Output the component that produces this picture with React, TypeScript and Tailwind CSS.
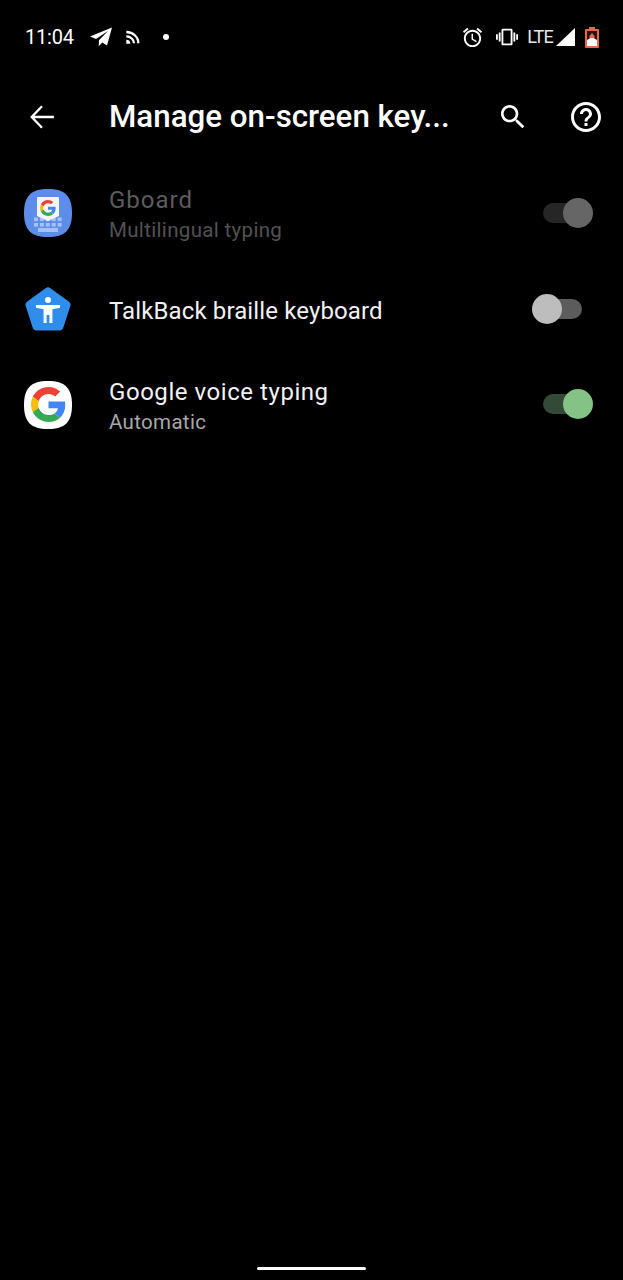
const FONT = "font-['Roboto',sans-serif]";

function GoogleG({ className }: { className?: string }) {
  return (
    <svg viewBox="0 0 48 48" className={className}>
      <path fill="#EA4335" d="M24 9.5c3.54 0 6.71 1.22 9.21 3.6l6.85-6.85C35.9 2.38 30.47 0 24 0 14.62 0 6.51 5.38 2.56 13.22l7.98 6.19C12.43 13.72 17.74 9.5 24 9.5z" />
      <path fill="#4285F4" d="M46.98 24.55c0-1.57-.15-3.09-.38-4.55H24v9.02h12.94c-.58 2.96-2.26 5.48-4.78 7.18l7.73 6c4.51-4.18 7.09-10.36 7.09-17.65z" />
      <path fill="#FBBC05" d="M10.53 28.59c-.48-1.45-.76-2.99-.76-4.59s.27-3.14.76-4.59l-7.98-6.19C.92 16.46 0 20.12 0 24c0 3.88.92 7.54 2.56 10.78l7.97-6.19z" />
      <path fill="#34A853" d="M24 48c6.48 0 11.93-2.13 15.89-5.81l-7.73-6c-2.15 1.45-4.92 2.3-8.16 2.3-6.26 0-11.57-4.22-13.47-9.91l-7.98 6.19C6.51 42.62 14.62 48 24 48z" />
    </svg>
  );
}

function Squircle({ fill }: { fill: string }) {
  return <path fill={fill} d="M24 0C41 0 48 7 48 24S41 48 24 48 0 41 0 24 7 0 24 0z" />;
}

function GboardIcon() {
  const keys = [0, 1, 2, 3, 4];
  return (
    <div className="relative h-12 w-12">
      <svg viewBox="0 0 48 48" className="h-12 w-12">
        <Squircle fill="#5c8ee9" />
        {keys.map((k) => (
          <rect key={`a${k}`} x={10 + k * 5.9} y={28.5} width="4" height="3.6" fill="#a6c2f5" />
        ))}
        {keys.map((k) => (
          <rect key={`b${k}`} x={10 + k * 5.9} y={34} width="4" height="3.6" fill="#a6c2f5" />
        ))}
        <rect x="14" y="39" width="20" height="4" fill="#a6c2f5" />
        <path fill="#f3f5fb" d="M14 8h20a1 1 0 0 1 1 1v18l-11 5-11-5V9a1 1 0 0 1 1-1z" />
      </svg>
      <GoogleG className="absolute left-[16px] top-[11px] h-[16px] w-[16px]" />
    </div>
  );
}

function TalkBackIcon() {
  return (
    <svg viewBox="0 0 46 45" className="h-[45px] w-[46px]">
      <path fill="#2f8eec" d="M20.6 1.2a4 4 0 0 1 4.8 0l18.4 13.4a4 4 0 0 1 1.5 4.5l-7 21.6a4 4 0 0 1-3.8 2.8H11.5a4 4 0 0 1-3.8-2.8l-7-21.6a4 4 0 0 1 1.5-4.500z" />
      <circle cx="23" cy="13" r="3" fill="#fff" />
      <path fill="#fff" d="M11 18h24v2.800l-7.600 1.400V36h-3v-8h-2.800v8h-3V22.200L11 20.800z" />
    </svg>
  );
}

function GoogleIcon() {
  return (
    <div className="relative h-12 w-12">
      <svg viewBox="0 0 48 48" className="h-12 w-12">
        <Squircle fill="#ffffff" />
      </svg>
      <GoogleG className="absolute left-[7px] top-[6px] h-[35px] w-[35px]" />
    </div>
  );
}

function Toggle({ on, trackClass, thumbClass, className = '' }: { on: boolean; trackClass: string; thumbClass: string; className?: string }) {
  return (
    <div className={`relative h-[30px] w-[61px] ${className}`}>
      <div className={`absolute left-[11px] top-[5px] h-[20px] w-[39px] rounded-full ${trackClass}`} />
      <div className={`absolute top-0 h-[30px] w-[30px] rounded-full ${on ? 'left-[31px]' : 'left-0'} ${thumbClass}`} />
    </div>
  );
}

interface RowProps {
  icon: React.ReactNode;
  title: string;
  subtitle?: string;
  titleClass: string;
  subClass?: string;
  toggle: React.ReactNode;
}

function Row({ icon, title, subtitle, titleClass, subClass, toggle }: RowProps) {
  return (
    <div className="flex h-[96px] items-center pl-[24px] pr-[30px]">
      <div className="flex w-[48px] justify-center">{icon}</div>
      <div className="ml-[37px] min-w-0 flex-1 pt-[4px]">
        <div className={`text-[24px] leading-[30px] ${titleClass}`}>{title}</div>
        {subtitle && <div className={`text-[20.5px] leading-[31px] tracking-[0.33px] ${subClass}`}>{subtitle}</div>}
      </div>
      {toggle}
    </div>
  );
}

export default function App() {
  return (
    <div className={`flex h-[1280px] w-[623px] flex-col overflow-hidden bg-black text-white ${FONT}`}>
      {/* status bar */}
      <div className="flex h-[74px] shrink-0 items-center pl-[25px] pr-[24px]">
        <span className="text-[20px] leading-none tracking-[-0.2px]">11:04</span>
        <svg viewBox="0 0 24 24" className="ml-[15px] h-[24px] w-[24px]">
          <path fill="#fff" d="M23 2.500 1 11.500l6 2.400L19 6 10 15.200l-.3 6 3.600-3.800 4.700 3.200z" />
        </svg>
        <svg viewBox="0 0 24 24" className="ml-[12px] h-[16px] w-[16px]">
          <path fill="none" stroke="#fff" strokeWidth="3.400" d="M2 4.500c10 0 18 7.500 18 17M2 11c6.500 0 11.500 5 11.500 10.500" />
          <path fill="#fff" d="M2 16a6 6 0 0 1 6 6H2z" />
        </svg>
        <span className="ml-[22px] h-[6px] w-[6px] rounded-full bg-white" />
        <div className="flex-1" />
        <svg viewBox="0 0 24 24" className="h-[23px] w-[23px]">
          <path fill="#fff" d="M22 5.720l-4.600-3.860-1.290 1.530 4.600 3.860L22 5.720zM7.880 3.390L6.600 1.860 2 5.710l1.290 1.530 4.590-3.850zM12.500 8H11v6l4.750 2.850.75-1.230-4-2.370V8zM12 4c-4.970 0-9 4.030-9 9s4.020 9 9 9c4.970 0 9-4.030 9-9s-4.030-9-9-9zm0 16c-3.870 0-7-3.130-7-7s3.130-7 7-7 7 3.130 7 7-3.130 7-7 7z" />
        </svg>
        <svg viewBox="0 0 24 24" className="ml-[12px] h-[22px] w-[22px]">
          <path fill="#fff" d="M0 15h2V9H0v6zm3 2h2V7H3v10zm19-8v6h2V9h-2zm-3 8h2V7h-2v10zM16.500 3h-9C6.670 3 6 3.670 6 4.500v15c0 .83.67 1.500 1.500 1.500h9c.83 0 1.500-.67 1.500-1.500v-15c0-.83-.67-1.500-1.500-1.500zM16 19H8V5h8v14z" />
        </svg>
        <span className="ml-[9px] text-[18px] leading-none tracking-[-0.8px] text-[#e8e8e8]">LTE</span>
        <svg viewBox="0 0 19 18" className="ml-[3px] h-[18px] w-[19px]">
          <path fill="#fff" d="M19 0v18H0z" />
        </svg>
        <svg viewBox="0 0 14 21" className="ml-[10px] h-[21px] w-[14px]">
          <path fill="#e8674a" d="M4 0h6v2h3a1 1 0 0 1 1 1v17a1 1 0 0 1-1 1H1a1 1 0 0 1-1-1V3a1 1 0 0 1 1-1h3z" />
          <rect x="2" y="4" width="10" height="15" fill="#2a1410" />
          <path fill="#fff" d="M2 13l5-3 5 3v6H2z" />
          <path fill="#e8674a" d="M7 6l2.500 3v2h-5V9z" />
        </svg>
      </div>

      {/* app bar */}
      <div className="flex h-[86px] shrink-0 items-center pl-[29px] pr-[19px]">
        <svg viewBox="0 0 24 24" className="h-[26px] w-[26px]">
          <path fill="none" stroke="#fff" strokeWidth="2.100" d="M23 12H2.500M12 2 2.500 12 12 22" />
        </svg>
        <h1 className="ml-[54px] flex-1 whitespace-nowrap text-[31.300px] font-medium leading-none">Manage on-screen key...</h1>
        <svg viewBox="0 0 24 24" className="h-[32px] w-[32px]">
          <path fill="#fff" d="M15.500 14h-.79l-.28-.27C15.410 12.590 16 11.110 16 9.500 16 5.910 13.090 3 9.500 3S3 5.910 3 9.500 5.910 16 9.500 16c1.610 0 3.090-.59 4.230-1.570l.27.28v.79l5 4.990L20.490 19l-4.990-5zm-6 0C7.010 14 5 11.990 5 9.500S7.010 5 9.500 5 14 7.010 14 9.500 11.990 14 9.500 14z" />
        </svg>
        <svg viewBox="0 0 24 24" className="ml-[39px] h-[36px] w-[36px]">
          <path fill="#fff" d="M11 18h2v-2h-2v2zm1-16C6.480 2 2 6.480 2 12s4.480 10 10 10 10-4.480 10-10S17.520 2 12 2zm0 18c-4.410 0-8-3.590-8-8s3.590-8 8-8 8 3.590 8 8-3.590 8-8 8zm0-14c-2.210 0-4 1.790-4 4h2c0-1.100.9-2 2-2s2 .9 2 2c0 2-3 1.750-3 5h2c0-2.250 3-2.500 3-5 0-2.210-1.790-4-4-4z" />
        </svg>
      </div>

      {/* keyboards */}
      <div className="mt-[5px] flex flex-col">
        <Row
          icon={<GboardIcon />}
          title="Gboard"
          subtitle="Multilingual typing"
          titleClass="tracking-[1px] text-[#5c5c5c]"
          subClass="text-[#525252]"
          toggle={<Toggle on trackClass="bg-[#262626]" thumbClass="bg-[#666666]" />}
        />
        <Row
          icon={<TalkBackIcon />}
          title="TalkBack braille keyboard"
          titleClass="tracking-[0.12px] text-[#f2f2f2]"
          toggle={<Toggle on={false} trackClass="bg-[#5c5c5c]" thumbClass="bg-[#bdbdbd]" />}
        />
        <Row
          icon={<GoogleIcon />}
          title="Google voice typing"
          subtitle="Automatic"
          titleClass="tracking-[0.55px] text-[#f2f2f2]"
          subClass="text-[#a8a8a8]"
          toggle={<Toggle on className="mb-[2px]" trackClass="bg-[#344a38]" thumbClass="bg-[#85c285]" />}
        />
      </div>

      {/* gesture bar */}
      <div className="mt-auto flex h-[13px] shrink-0 justify-center">
        <div className="h-[3px] w-[109px] rounded-full bg-white" />
      </div>
    </div>
  );
}
